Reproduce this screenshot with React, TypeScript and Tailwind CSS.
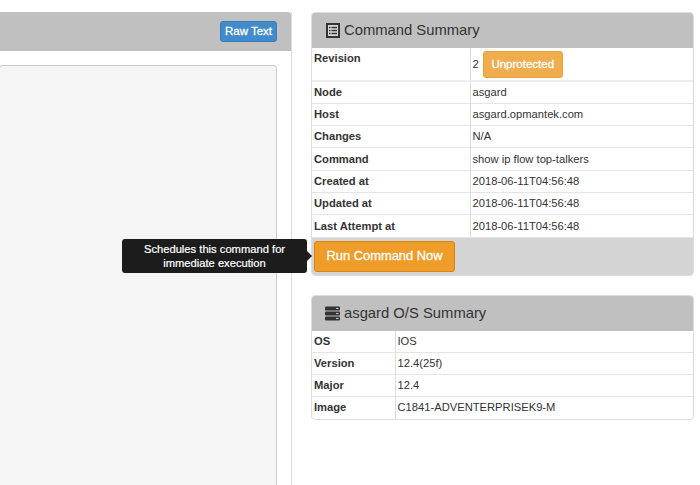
const font = { fontFamily: '"Liberation Sans", Arial, sans-serif' };

const summaryRows = [
  ["Node", "asgard"],
  ["Host", "asgard.opmantek.com"],
  ["Changes", "N/A"],
  ["Command", "show ip flow top-talkers"],
  ["Created at", "2018-06-11T04:56:48"],
  ["Updated at", "2018-06-11T04:56:48"],
  ["Last Attempt at", "2018-06-11T04:56:48"],
];

const osRows = [
  ["OS", "IOS"],
  ["Version", "12.4(25f)"],
  ["Major", "12.4"],
  ["Image", "C1841-ADVENTERPRISEK9-M"],
];

function ListIcon() {
  return (
    <svg width="14" height="15" viewBox="0 0 14 15" className="shrink-0">
      <rect x="0.5" y="0.5" width="13" height="14" fill="#d8d8d8" stroke="#333" />
      <rect x="1.5" y="1.5" width="11" height="12" fill="none" stroke="#333" />
      <path d="M3 4.5h1.5M3 7.5h1.5M3 10.5h1.5M5.5 4.5h5.5M5.5 7.5h5.5M5.5 10.5h5.5" stroke="#333" strokeWidth="1.4" />
    </svg>
  );
}

function ServerIcon() {
  return (
    <svg width="15" height="15" viewBox="0 0 15 15" className="shrink-0">
      <rect x="0" y="0.5" width="15" height="4" rx="1" fill="#333" />
      <rect x="0" y="5.5" width="15" height="4" rx="1" fill="#333" />
      <rect x="0" y="10.5" width="15" height="4" rx="1" fill="#333" />
      <path d="M11 2.5h2.5M11 7.5h2.5M11 12.5h2.5" stroke="#ccc" strokeWidth="1" />
    </svg>
  );
}

export default function App() {
  return (
    <div className="relative flex h-[485px] w-[700px] items-start overflow-hidden bg-white text-[#333]" style={font}>
      <section className="mt-3 flex h-[473px] w-[292px] shrink-0 flex-col border-r border-[#dddddd]">
        <div className="flex h-[39px] shrink-0 items-center justify-end rounded-tr-[3px] bg-[#c0c0c0] pr-[14px]">
          <button className="h-[21px] w-[57px] rounded-[3px] border border-[#357ebd] bg-[#428bca] text-[11.5px] text-white [-webkit-text-stroke:0.3px_white]">
            Raw Text
          </button>
        </div>
        <div className="pt-[14px] pr-[14px]">
          <div className="-ml-px h-[500px] rounded-[3px] border border-[#cccccc] bg-[#f5f5f5]" />
        </div>
      </section>

      <div className="ml-[19px] flex w-[383px] shrink-0 flex-col gap-[19px] pt-3">
        <section className="overflow-hidden rounded border border-[#dddddd] bg-white">
          <div className="flex h-[35px] items-center gap-[4px] bg-[#c0c0c0] pl-[14px] text-[14.8px]">
            <ListIcon />
            <span>Command Summary</span>
          </div>
          <table className="w-full border-collapse text-[11.2px]">
            <tbody>
              <tr className="h-[33px] border-b-2 border-[#eeeeee] align-top">
                <th className="w-[158px] border-r border-[#dddddd] px-[2px] pt-[2px] text-left font-bold">Revision</th>
                <td className="px-[2px] pt-[3px]">
                  <div className="flex items-start gap-[4px]">
                    <span className="mt-[5px]">2</span>
                    <span className="flex h-[27px] w-[80px] items-center justify-center rounded-[3px] border border-[#eea236] bg-[#f0ad4e] text-[11.5px] text-white [-webkit-text-stroke:0.3px_white]">
                      Unprotected
                    </span>
                  </div>
                </td>
              </tr>
              {summaryRows.map(([label, value]) => (
                <tr key={label} className="h-[22.3px] border-b border-[#e4e4e4]">
                  <th className="border-r border-[#dddddd] px-[2px] text-left font-bold">{label}</th>
                  <td className="px-[2px]">{value}</td>
                </tr>
              ))}
            </tbody>
          </table>
          <div className="bg-[#d4d4d4] px-[2px] py-[3px]">
            <button className="h-[31px] w-[141px] rounded-[3px] border border-[#d58512] bg-[#f09c28] text-[12.9px] text-white [-webkit-text-stroke:0.3px_white]">
              Run Command Now
            </button>
          </div>
        </section>

        <section className="overflow-hidden rounded border border-[#dddddd] bg-white">
          <div className="flex h-[35px] items-center gap-[4px] bg-[#c0c0c0] pl-[13px] text-[14.8px]">
            <ServerIcon />
            <span>asgard O/S Summary</span>
          </div>
          <table className="w-full border-collapse text-[11.2px]">
            <tbody>
              {osRows.map(([label, value]) => (
                <tr key={label} className="h-[22px] border-b border-[#e4e4e4] last:border-b-0">
                  <th className="w-[83px] border-r border-[#dddddd] px-[2px] text-left font-bold">{label}</th>
                  <td className="px-[2px]">{value}</td>
                </tr>
              ))}
            </tbody>
          </table>
        </section>
      </div>

      <div className="absolute top-[239px] left-[122px] flex h-[34px] w-[185px] items-center justify-center rounded-[3px] bg-[#1c1c1c] text-center text-[11.2px] leading-[14px] text-white [-webkit-text-stroke:0.2px_white]">
        Schedules this command for
        <br />
        immediate execution
        <span className="absolute top-[12px] -right-[5px] h-0 w-0 border-y-[5px] border-l-[5px] border-y-transparent border-l-[#1c1c1c]" />
      </div>
    </div>
  );
}
